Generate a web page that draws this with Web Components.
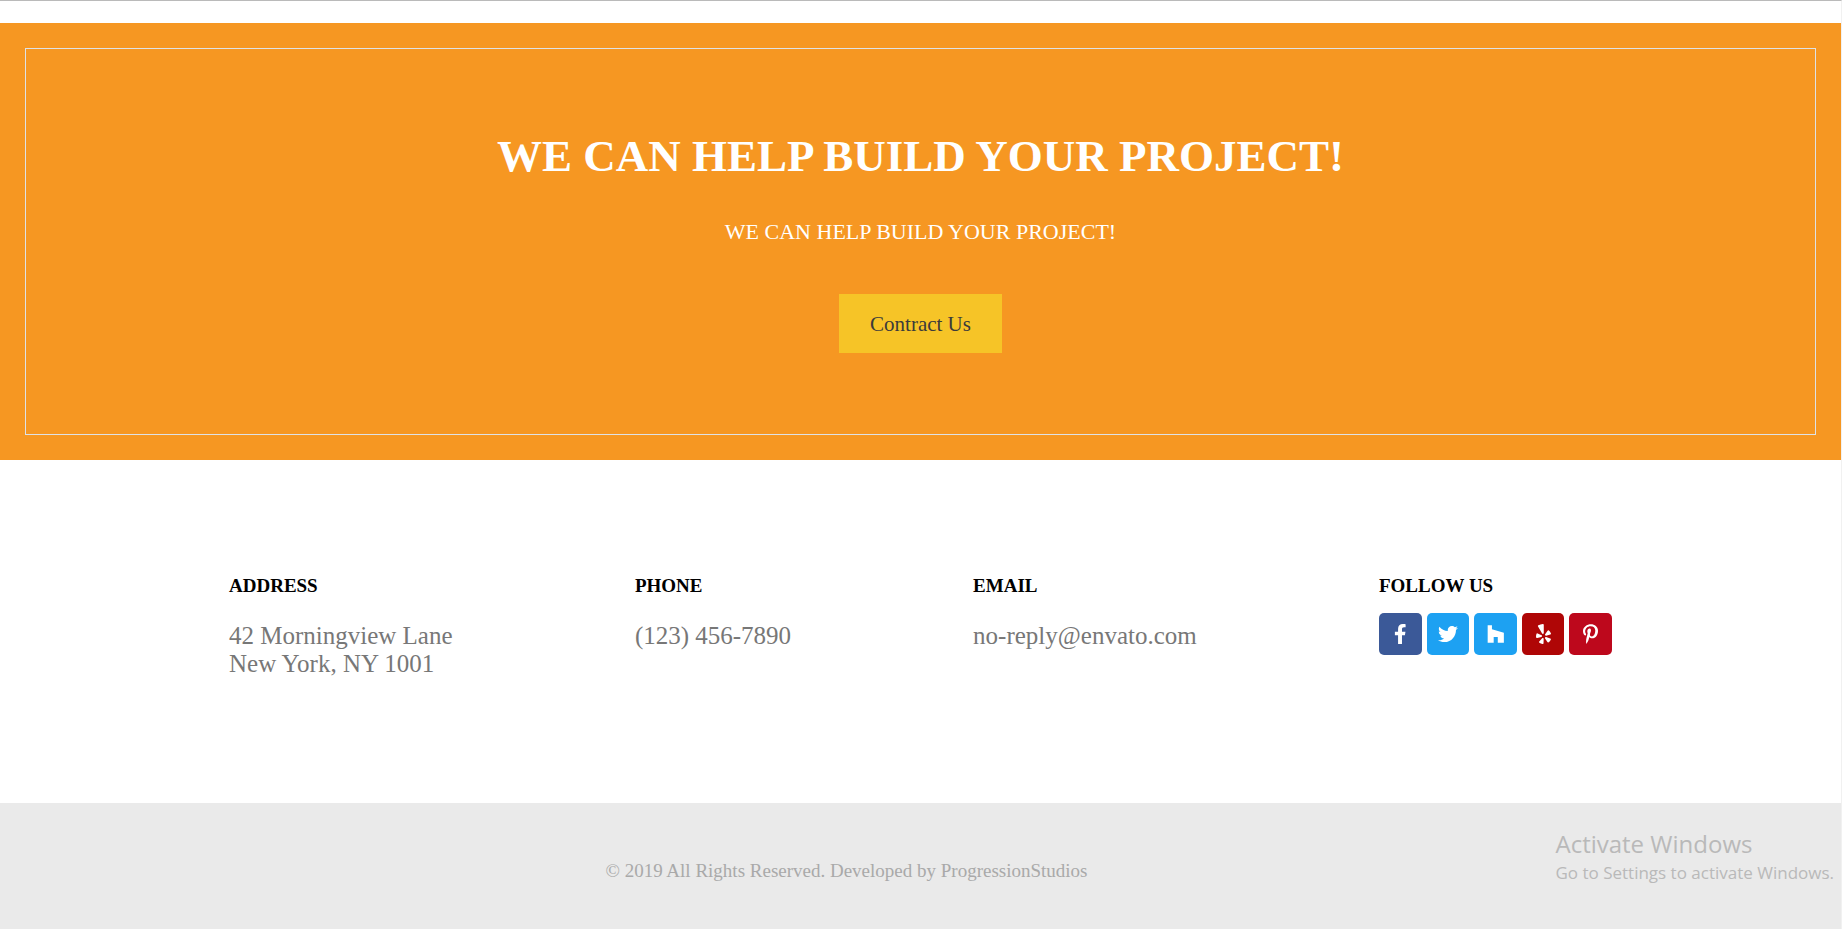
<!DOCTYPE html>
<html lang="en">
<head>
<meta charset="utf-8">
<title>We can help build your project</title>
<style>
  html { background: #fff; }
  body { margin: 0; font-family: "Liberation Serif", "Times New Roman", serif; }
</style>
</head>
<body>
<site-page>
  <call-banner>
    <span slot="title">WE CAN HELP BUILD YOUR PROJECT!</span>
    <span slot="text">WE CAN HELP BUILD YOUR PROJECT!</span>
    <span slot="action">Contract Us</span>
  </call-banner>
  <contact-row>
    <contact-item heading="ADDRESS">42 Morningview Lane<br>New York, NY 1001</contact-item>
    <contact-item heading="PHONE">(123) 456-7890</contact-item>
    <contact-item heading="EMAIL">no-reply@envato.com</contact-item>
    <contact-item heading="FOLLOW US" compact>
      <social-links></social-links>
    </contact-item>
  </contact-row>
  <copyright-bar>© 2019 All Rights Reserved. Developed by ProgressionStudios</copyright-bar>
  <activation-note>
    <span slot="title">Activate Windows</span>
    <span slot="text">Go to Settings to activate Windows.</span>
  </activation-note>
</site-page>

<script>
  function define(name, markup, setup) {
    const template = document.createElement('template');
    template.innerHTML = markup;
    customElements.define(name, class extends HTMLElement {
      constructor() {
        super();
        this.attachShadow({ mode: 'open' }).append(template.content.cloneNode(true));
      }
      connectedCallback() {
        if (setup) setup(this, this.shadowRoot);
      }
    });
  }

  define('site-page', `
    <style>
      :host {
        display: flex; flex-direction: column; position: relative;
        box-sizing: border-box; min-height: 100vh;
        border-top: 1px solid #bababa; border-right: 1px solid #f1f1f1;
        padding-top: 22px;
      }
    </style>
    <slot></slot>`);

  define('call-banner', `
    <style>
      :host { display: block; background: #f69722; padding: 25px; color: #fff; text-align: center; }
      section {
        display: flex; flex-direction: column; align-items: center;
        border: 1px solid #dee2e6; padding: 81px 24px;
      }
      h1 { margin: 0 0 37px; font-size: 45px; line-height: 52px; font-weight: 700; }
      p { margin: 0 0 49px; font-size: 22px; line-height: 26px; }
      button {
        border: 0; padding: 18px 31px 17px; background: #f6c427; color: #3b3b3b;
        font: 21px/24px "Liberation Serif", "Times New Roman", serif;
      }
    </style>
    <section>
      <h1><slot name="title"></slot></h1>
      <p><slot name="text"></slot></p>
      <button type="button"><slot name="action"></slot></button>
    </section>`);

  define('contact-row', `
    <style>
      :host {
        display: grid; grid-template-columns: 12fr 10fr 12fr 233px;
        padding: 115px 229px 125px;
      }
    </style>
    <slot></slot>`);

  define('contact-item', `
    <style>
      :host { display: block; }
      h2 { margin: 0 0 25px; color: #000; font-size: 19px; line-height: 22px; font-weight: 700; }
      :host([compact]) h2 { margin-bottom: 16px; }
      div { color: #777; font-size: 25px; line-height: 28px; }
    </style>
    <h2></h2>
    <div><slot></slot></div>`,
    (host, root) => { root.querySelector('h2').textContent = host.getAttribute('heading'); });

  define('social-links', `
    <style>
      :host { display: flex; gap: 5px; }
      a {
        flex: 1; height: 42px; border-radius: 5px;
        display: flex; align-items: center; justify-content: center;
      }
      svg { height: 20px; fill: #fff; }
      .facebook { background: #3b5998; }
      .twitter, .houzz { background: #1da1f2; }
      .yelp { background: #af0606; }
      .pinterest { background: #bd081c; }
    </style>
    <a class="facebook" href="#" aria-label="Facebook"><svg viewBox="0 0 320 512"><path d="M279.14 288l14.22-92.66h-88.91v-60.13c0-25.35 12.42-50.06 52.24-50.06h40.42V6.26S260.43 0 225.36 0c-73.22 0-121.08 44.38-121.08 124.72v70.62H22.89V288h81.39v224h100.17V288z"/></svg></a>
    <a class="twitter" href="#" aria-label="Twitter"><svg viewBox="0 0 512 512"><path d="M459.37 151.716c.325 4.548.325 9.097.325 13.645 0 138.72-105.583 298.558-298.558 298.558-59.452 0-114.68-17.219-161.137-47.106 8.447.974 16.568 1.299 25.34 1.299 49.055 0 94.213-16.568 130.274-44.832-46.132-.975-84.792-31.188-98.112-72.772 6.498.974 12.995 1.624 19.818 1.624 9.421 0 18.843-1.3 27.614-3.573-48.081-9.747-84.143-51.98-84.143-102.985v-1.299c13.969 7.797 30.214 12.67 47.431 13.319-28.264-18.843-46.781-51.005-46.781-87.391 0-19.492 5.197-37.36 14.294-52.954 51.655 63.675 129.3 105.258 216.365 109.807-1.624-7.797-2.599-15.918-2.599-24.04 0-57.828 46.782-104.934 104.934-104.934 30.213 0 57.502 12.67 76.67 33.137 23.715-4.548 46.456-13.32 66.599-25.34-7.798 24.366-24.366 44.833-46.132 57.827 21.117-2.273 41.584-8.122 60.426-16.243-14.292 20.791-32.161 39.308-52.628 54.253z"/></svg></a>
    <a class="houzz" href="#" aria-label="Houzz"><svg viewBox="0 0 448 512"><path d="M275.9 330.7H171.3V480H17V32h109.5v104.5l305.1 85.6V480H275.9z"/></svg></a>
    <a class="yelp" href="#" aria-label="Yelp"><svg viewBox="0 0 384 512"><path d="M42.9 240.32l99.62 48.61c19.2 9.4 16.2 37.51-4.5 42.71L30.5 358.45a22.79 22.79 0 0 1-28.21-19.6 197.16 197.16 0 0 1 9-85.32 22.8 22.8 0 0 1 31.61-13.21zm44 239.25a199.45 199.45 0 0 0 79.42 32.11A22.78 22.78 0 0 0 192.94 490l3.9-110.82c.7-21.3-25.5-31.91-39.81-16.1l-74.21 82.4a22.82 22.82 0 0 0 4.09 34.09zm145.34-109.92l58.81 94a22.93 22.93 0 0 0 34 5.5 198.36 198.36 0 0 0 52.71-67.61A23 23 0 0 0 364.17 370l-105.42-34.26c-20.31-6.5-37.81 15.8-26.51 33.91zm148.33-132.23a197.44 197.44 0 0 0-50.41-69.31 22.85 22.85 0 0 0-34 4.4l-62 91.92c-11.9 17.7 4.7 40.61 25.2 34.71L366 268.63a23 23 0 0 0 14.61-31.21zM62.11 30.18a22.86 22.86 0 0 0-9.9 32l104.12 180.44c11.7 20.2 42.61 11.9 42.61-11.4V22.88a22.67 22.67 0 0 0-24.5-22.8 320.37 320.37 0 0 0-112.33 30.1z"/></svg></a>
    <a class="pinterest" href="#" aria-label="Pinterest"><svg viewBox="0 0 384 512"><path d="M204 6.5C101.4 6.5 0 74.9 0 185.6 0 256 39.6 296 63.6 296c9.9 0 15.6-27.6 15.6-35.4 0-9.3-23.7-29.1-23.7-67.8 0-80.4 61.2-137.4 140.4-137.4 68.1 0 118.5 38.7 118.5 109.8 0 53.1-21.3 152.7-90.3 152.7-24.9 0-46.2-18-46.2-43.8 0-37.8 26.4-74.4 26.4-113.4 0-66.2-93.9-54.2-93.9 25.8 0 16.8 2.1 35.4 9.6 50.7-13.8 59.4-42 147.9-42 209.1 0 18.9 2.7 37.5 4.5 56.4 3.4 3.8 1.7 3.4 6.9 1.5 50.4-69 48.6-82.5 71.4-172.8 12.3 23.4 44.1 36 69.3 36 106.2 0 153.9-103.5 153.9-196.8C384 71.3 298.2 6.5 204 6.5z"/></svg></a>`);

  define('copyright-bar', `
    <style>
      :host {
        display: block; flex: 1; background: #eaeaea; color: #a9a9a9;
        padding: 57px 148px 47px 0; text-align: center;
      }
      p { margin: 0; font-size: 19px; line-height: 22px; }
    </style>
    <p><slot></slot></p>`);

  define('activation-note', `
    <style>
      :host {
        display: block; position: absolute; right: 7px; bottom: 44px; color: #b9b9b9;
        font-family: "Open Sans", "Noto Sans", sans-serif; white-space: nowrap;
      }
      p { margin: 0; }
      .title { font-size: 24px; line-height: 34px; }
      .text { font-size: 17px; line-height: 24px; }
    </style>
    <p class="title"><slot name="title"></slot></p>
    <p class="text"><slot name="text"></slot></p>`);
</script>
</body>
</html>
